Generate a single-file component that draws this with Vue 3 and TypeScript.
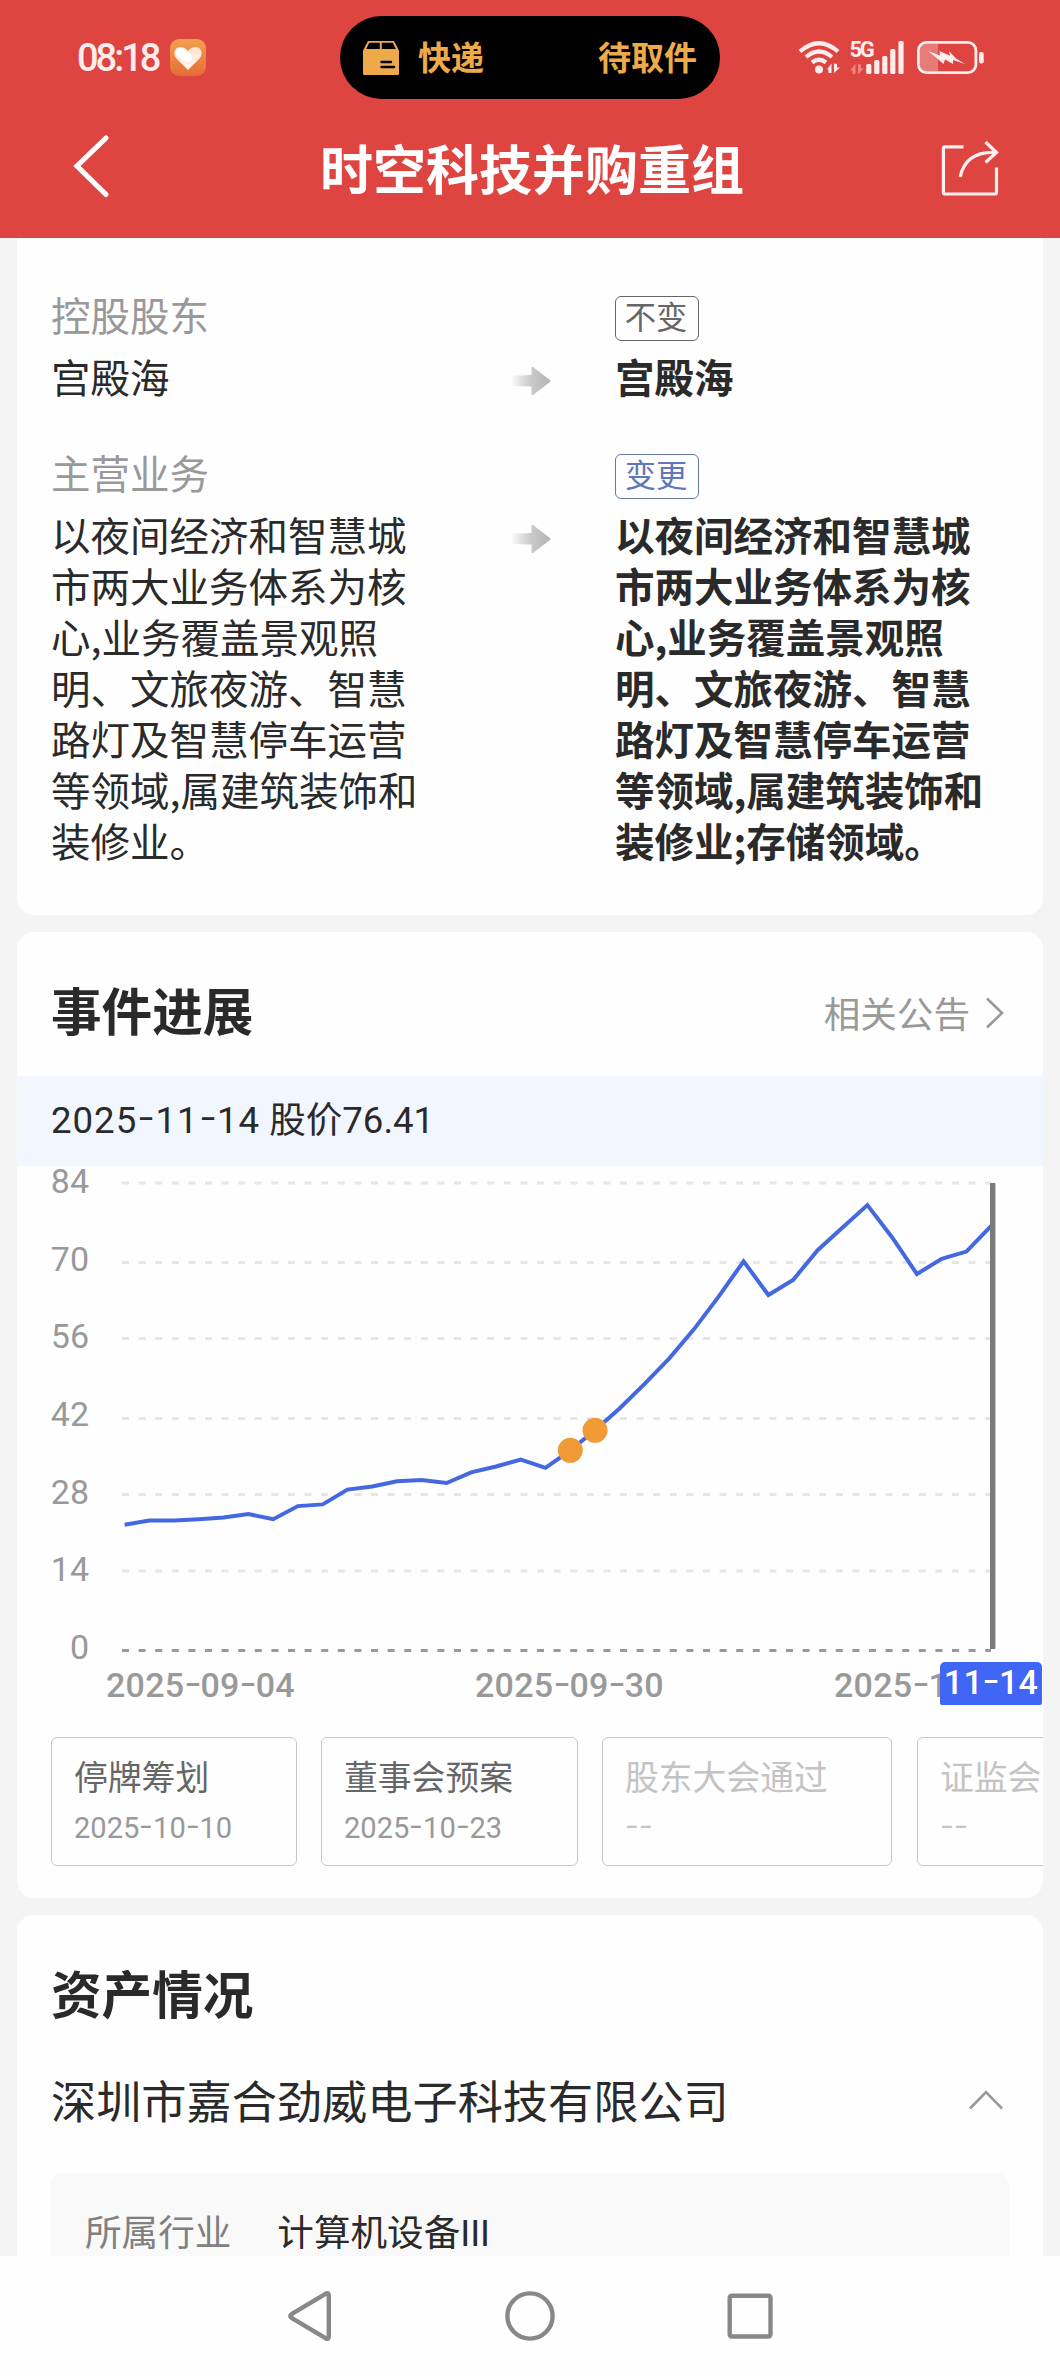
<script setup lang="ts">
import { computed } from 'vue'

interface Change {
  label: string
  tag: string
  changed: boolean
  before: string
  after: string
}
interface Stage {
  name: string
  date: string[]
  done: boolean
}

const changes: Change[] = [
  { label: '控股股东', tag: '不变', changed: false, before: '宫殿海', after: '宫殿海' },
  {
    label: '主营业务',
    tag: '变更',
    changed: true,
    before: '以夜间经济和智慧城市两大业务体系为核心,业务覆盖景观照明、文旅夜游、智慧路灯及智慧停车运营等领域,属建筑装饰和装修业。',
    after: '以夜间经济和智慧城市两大业务体系为核心,业务覆盖景观照明、文旅夜游、智慧路灯及智慧停车运营等领域,属建筑装饰和装修业;存储领域。',
  },
]

const yTicks = [84, 70, 56, 42, 28, 14, 0]
const gridY = [17, 96.5, 172.5, 252.5, 328.5, 405, 484.5]
const xTicks: string[][] = [
  ['2025', '09', '04'],
  ['2025', '09', '30'],
  ['2025', '11', '14'],
]

// Plot heights in chart pixels, one per trading day
const prices: number[] = [
  358.7, 354.6, 354.4, 353.2, 351.5, 348, 353.2, 340.1, 338.4, 323.6, 320.5, 315.3,
  313.9, 317, 306.4, 300.5, 293.6, 301.9, 284.3, 264.3, 242.3, 217.9, 192.4, 163.1, 130.4,
  95.3, 129, 113.9, 83.9, 61.5, 39.1, 71.5, 108, 92.9, 85.6, 59.8,
]
const px = (i: number): number => 36.6 + i * 24.76
const line = computed(() => prices.map((y, i) => `${px(i).toFixed(1)},${y}`).join(' '))
const events = [18, 19]

const stages: Stage[] = [
  { name: '停牌筹划', date: ['2025', '10', '10'], done: true },
  { name: '董事会预案', date: ['2025', '10', '23'], done: true },
  { name: '股东大会通过', date: ['', '', ''], done: false },
  { name: '证监会', date: ['', '', ''], done: false },
]
const stageWidths = [246, 257, 290, 257]
</script>

<template>
  <div class="screen">
    <header class="header">
      <div class="status">
        <span class="time">08:18</span>
        <svg class="badge" width="36" height="37" viewBox="0 0 36 37">
          <defs>
            <linearGradient id="badgeBg" x1="0" y1="0" x2="0" y2="1">
              <stop offset="0" stop-color="#f3a050" /><stop offset="1" stop-color="#e66c34" />
            </linearGradient>
            <linearGradient id="heart" x1="0" y1="0" x2="0" y2="1">
              <stop offset="0" stop-color="#fbe3cf" /><stop offset="1" stop-color="#fff6ee" />
            </linearGradient>
          </defs>
          <rect width="36" height="37" rx="9" fill="url(#badgeBg)" />
          <path d="M18 31 L6.5 19.5 C2 14.500 5 8 10.500 8 C14 8 16.500 9.800 18 12 C19.500 9.800 22 8 25.500 8 C31 8 34 14.500 29.500 19.500 Z" fill="url(#heart)" />
          <path d="M10 13.500 L17.500 18.500" stroke="#fff" stroke-width="9" stroke-linecap="round" />
        </svg>
        <div class="island">
          <svg width="36" height="34" viewBox="0 0 36 34">
            <path d="M5 0 H31 L36 9.500 V32.500 Q36 34 34.500 34 H1.500 Q0 34 0 32.500 V9.500 Z" fill="#edaa4a" />
            <path d="M6.200 1.800 H16.800 V8 H3.200 Z M18.800 1.800 H29.800 L32.800 8 H18.800 Z" fill="#000" />
            <path d="M18.500 21 H28 M18.500 26 H31" stroke="#000" stroke-width="2.400" stroke-linecap="round" />
          </svg>
          <span class="island-a">快递</span>
          <span class="island-b">待取件</span>
        </div>
        <svg class="signals" width="188" height="36" viewBox="797 40 188 36" fill="none">
          <g stroke="#ffecec" stroke-width="4.200">
            <path d="M800 51.500 Q819 35 838 51.500" />
            <path d="M806 57 Q819 46 832 57" />
            <path d="M812 62.500 Q819 57 826 62.500" />
          </g>
          <circle cx="819" cy="69.500" r="4" fill="#ffecec" />
          <path d="M831.500 63.500 V73 H828.500 V69.500 H827 Z M834 63.500 V73 L840 67.500 H837 V64 Z" fill="#ffecec" />
          <path d="M855.500 64 V74 H852.500 V70.500 H850 Z M858 64 V74 L864 68.500 H861 V64.500 Z" fill="#f08280" />
          <text x="849.500" y="57.300" class="net" fill="#ffecec">5G</text>
          <path d="M938 44 H925 Q920 44 920 49 V66 Q920 71 925 71 H938 Z" fill="#e57c79" />
          <g fill="#ffecec">
            <rect x="866.200" y="64" width="5.200" height="10" rx="1.500" />
            <rect x="874.200" y="60" width="5.200" height="14" rx="1.500" />
            <rect x="882.200" y="56" width="5.200" height="18" rx="1.500" />
            <rect x="890.200" y="49" width="5.200" height="25" rx="1.500" />
            <rect x="898.400" y="41" width="5.200" height="33" rx="1.500" />
            <rect x="979" y="52" width="4.700" height="11.500" rx="2" />
            <path d="M928 51 L940 55.500 L939.500 51 L950 55.800 L949 51 L956 58.500 L965 64 L953 60 L953 64 L945 59.500 L943.500 64 L936 57.500 Z" />
          </g>
          <rect x="918.400" y="42.300" width="57.500" height="30.400" rx="8" stroke="#ffecec" stroke-width="2.800" />
        </svg>
      </div>
      <div class="titlebar">
        <svg width="38" height="66" viewBox="73 133 38 66" fill="none">
          <path d="M106 138 L77 166 L106 194.500" stroke="#fff" stroke-width="5.200" stroke-linecap="round" />
        </svg>
        <h1>时空科技并购重组</h1>
        <svg width="60" height="60" viewBox="940 136 60 60" fill="none" stroke="#fff0f0" stroke-width="3.200">
          <path d="M963.500 146.800 H945.200 Q943.400 146.800 943.400 148.600 V192.200 Q943.400 194 945.200 194 H994.700 Q996.500 194 996.500 192.200 V167.500" />
          <path d="M960.200 177 C963.500 161 975 151.500 996 152.500" />
          <path d="M985.500 142 L996.500 152.500 L985.500 162.500" />
        </svg>
      </div>
    </header>

    <main class="content">
      <section class="card compare">
        <div v-for="c in changes" :key="c.label" class="change">
          <div class="before">
            <p class="label">{{ c.label }}</p>
            <p class="value">{{ c.before }}</p>
          </div>
          <svg class="arrow" width="40" height="30" viewBox="0 0 40 30">
            <defs>
              <linearGradient :id="'fade' + c.tag" x1="0" x2="1" y1="0" y2="0">
                <stop offset="0" stop-color="#c0c0c0" stop-opacity="0" />
                <stop offset=".5" stop-color="#cacaca" />
                <stop offset="1" stop-color="#b4b4b4" />
              </linearGradient>
            </defs>
            <path d="M0 11 Q0 9.800 1 9.700 L20.500 9 V2 Q20.500 .3 22 1 L39 14 Q40 15 39 16 L22 29 Q20.500 29.700 20.500 28 V20.500 L1 20 Q0 20 0 19 Z" :fill="`url(#fade${c.tag})`" />
          </svg>
          <div class="after">
            <p class="label"><span class="tag" :class="{ changed: c.changed }">{{ c.tag }}</span></p>
            <p class="value">{{ c.after }}</p>
          </div>
        </div>
      </section>

      <section class="card progress">
        <div class="head">
          <h2>事件进展</h2>
          <span class="more">相关公告
            <svg width="20" height="32" viewBox="0 0 20 32" fill="none" stroke="#999" stroke-width="2.600">
              <path d="M2 1.500 L17 16 L2 30.500" />
            </svg>
          </span>
        </div>
        <div class="band"><span class="num">2025<i class="dash">-</i>11<i class="dash">-</i>14</span> 股价76.41</div>
        <div class="chart">
          <div class="plot">
            <div class="y-axis"><span v-for="t in yTicks" :key="t">{{ t }}</span></div>
            <svg width="954" height="490" viewBox="1 0 954 490" fill="none">
              <line v-for="(y, i) in gridY" :key="y" x1="34" x2="903" :y1="y" :y2="y" stroke-width="3" stroke-dasharray="7 9.600" :stroke="i === 6 ? '#999' : '#e6e6e6'" />
              <polyline :points="line" stroke="#4468e0" stroke-width="4" />
              <rect x="902" y="17" width="5.400" height="466" fill="#7b7b7b" />
              <circle v-for="e in events" :key="e" :cx="px(e)" :cy="prices[e]" r="12.500" fill="#f19a38" />
            </svg>
          </div>
          <div class="x-axis">
            <span v-for="(t, i) in xTicks" :key="i">{{ t[0] }}<i class="dash">-</i>{{ t[1] }}<i class="dash">-</i>{{ t[2] }}</span>
            <b class="cursor">11<i class="dash">-</i>14</b>
          </div>
        </div>
        <div class="stages">
          <div v-for="(s, i) in stages" :key="s.name" class="stage" :class="{ pending: !s.done }" :style="{ width: stageWidths[i] + 'px' }">
            <p>{{ s.name }}</p>
            <small>{{ s.date[0] }}<i class="dash">-</i>{{ s.date[1] }}<i class="dash">-</i>{{ s.date[2] }}</small>
          </div>
        </div>
      </section>

      <section class="card assets">
        <h2>资产情况</h2>
        <div class="company">
          <span>深圳市嘉合劲威电子科技有限公司</span>
          <svg width="36" height="20" viewBox="0 0 36 20" fill="none" stroke="#999" stroke-width="2.600">
            <path d="M2 18.500 L18 2 L34 18.500" />
          </svg>
        </div>
        <div class="info"><span class="key">所属行业</span><span>计算机设备III</span></div>
      </section>
    </main>

    <nav class="nav">
      <svg width="1060" height="120" viewBox="0 2256 1060 120" fill="none" stroke="#888" stroke-width="4.400" stroke-linejoin="round">
        <path d="M325.500 2293.800 Q328.800 2292 328.800 2295.500 V2336.500 Q328.800 2340 325.500 2338.200 L291.500 2317.800 Q289 2316 291.500 2314.200 Z" />
        <circle cx="530" cy="2316" r="22.600" />
        <rect x="729.700" y="2295.700" width="40.800" height="40.800" rx="2" />
      </svg>
    </nav>
  </div>
</template>

<style>
body {
  margin: 0;
  background: #f4f4f4;
}
</style>

<style scoped>
.screen {
  display: flex;
  flex-direction: column;
  width: 1060px;
  height: 2376px;
  overflow: hidden;
  background: #f4f4f4;
  color: #2a2a2a;
  font-family: 'Noto Sans CJK SC', sans-serif;
}
p,
h1,
h2 {
  margin: 0;
}
svg {
  display: block;
  flex: none;
}
.header {
  flex: none;
  height: 238px;
  background: #de4440;
}
.status {
  display: flex;
  align-items: center;
  height: 115px;
}
.time {
  width: 93px;
  padding-left: 77px;
  color: #ffecec;
  font: 500 38px/40px 'Roboto', sans-serif;
  letter-spacing: -3px;
}
.island {
  display: flex;
  align-items: center;
  box-sizing: border-box;
  width: 380px;
  height: 83px;
  margin-left: 134px;
  padding: 0 23px;
  border-radius: 42px;
  background: #000;
  color: #edaa4a;
  font-size: 33px;
  font-weight: 700;
  line-height: 40px;
}
.island-a {
  margin: -3px 0 0 19px;
}
.island-b {
  margin: -3px 0 0 auto;
}
.signals {
  margin-left: 77px;
  overflow: visible;
}
.net {
  font: 700 22px 'Roboto', sans-serif;
  letter-spacing: -2.400px;
}
.titlebar {
  display: flex;
  align-items: center;
  justify-content: space-between;
  height: 102px;
  padding: 0 60px 0 73px;
}
h1 {
  margin-top: 2px;
  padding-left: 13px;
  color: #fff;
  font-size: 53px;
  font-weight: 700;
  line-height: 70px;
}
.content {
  display: flex;
  flex: none;
  flex-direction: column;
  gap: 17px;
  height: 2018px;
  padding: 0 17px;
  overflow: hidden;
}
.card {
  flex: none;
  box-sizing: border-box;
  overflow: hidden;
  border-radius: 17px;
  background: #fefefe;
}
.compare {
  height: 677px;
  padding: 50px 34px 0;
  border-radius: 0 0 17px 17px;
}
.change {
  display: flex;
  margin-bottom: 45px;
  font-size: 39.500px;
  line-height: 51px;
}
.before,
.after {
  width: 372px;
}
.label {
  height: 51px;
  margin-bottom: 11px;
  color: #999;
}
.after {
  font-weight: 700;
}
.arrow {
  margin: 78px 64px 0 88px;
}
.tag {
  display: block;
  box-sizing: border-box;
  width: 84px;
  height: 45px;
  padding-right: 2px;
  border: 1px solid #666;
  border-radius: 6px;
  color: #666;
  font-size: 31.300px;
  font-weight: 400;
  line-height: 37px;
  text-align: center;
  transform: translateY(8px);
}
.tag.changed {
  border-color: #66799f;
  color: #6078ba;
}
.progress {
  height: 966px;
}
.head {
  display: flex;
  align-items: center;
  justify-content: space-between;
  box-sizing: border-box;
  height: 144px;
  padding: 9px 38px 0 34px;
}
h2 {
  font-size: 50.600px;
  font-weight: 700;
  line-height: 60px;
}
.more {
  display: flex;
  gap: 15px;
  align-items: center;
  padding-top: 9px;
  color: #999;
  font-size: 36.600px;
  line-height: 40px;
}
.band {
  height: 90px;
  padding-left: 34px;
  background: #f2f6ff;
  font: 36.600px/90px 'Roboto', 'Noto Sans CJK SC', sans-serif;
}
.num {
  letter-spacing: 1px;
}
.dash {
  display: inline-block;
  width: 0.47em;
  font-style: normal;
  letter-spacing: 0;
  text-align: center;
  transform: translateY(-0.07em) scaleX(1.4);
}
.band .dash {
  width: 0.5em;
}
.plot {
  display: flex;
  height: 490px;
}
.y-axis {
  display: flex;
  flex-direction: column;
  justify-content: space-between;
  width: 72px;
  height: 506px;
  margin-top: -5px;
  color: #999;
  font: 34px/40px 'Roboto', sans-serif;
  text-align: right;
}
.x-axis {
  position: relative;
  display: flex;
  box-sizing: border-box;
  gap: 182px;
  height: 50px;
  padding: 9px 0 0 89px;
  color: #999;
  font: 500 34px/40px 'Roboto', sans-serif;
  letter-spacing: 0.300px;
  white-space: nowrap;
}
.x-axis span {
  flex: none;
  width: 187px;
}
.x-axis span:nth-child(3) {
  margin-left: -10px;
}
.cursor {
  position: absolute;
  top: 6px;
  right: 1px;
  width: 102px;
  height: 43px;
  border-radius: 5px 5px 2px 2px;
  background: #4066f5;
  color: #fff;
  font-weight: 500;
  line-height: 41px;
  text-align: center;
}
.stages {
  display: flex;
  gap: 24px;
  margin-top: 31px;
  padding-left: 34px;
}
.stage {
  flex: none;
  box-sizing: border-box;
  height: 129px;
  padding: 17px 0 0 22px;
  border: 1px solid #c8c8c8;
  border-radius: 6px;
  color: #666;
  font-size: 33.800px;
  line-height: 42px;
  white-space: nowrap;
}
.stage:last-child {
  margin-left: 1px;
}
.stage small {
  display: block;
  margin-top: 11px;
  color: #999;
  font: 29.100px/40px 'Roboto', sans-serif;
}
.stage.pending,
.stage.pending small {
  color: #c3c3c3;
}
.assets {
  height: 480px;
  padding: 47px 34px 0;
}
.company {
  display: flex;
  align-items: center;
  justify-content: space-between;
  height: 60px;
  margin-top: 48px;
  padding-right: 5px;
  font-size: 45.200px;
  line-height: 60px;
}
.info {
  display: flex;
  gap: 46px;
  height: 300px;
  margin-top: 43px;
  padding: 41px 34px 0;
  border-radius: 12px;
  background: #f9f9f9;
  font: 36.600px/40px 'Roboto', 'Noto Sans CJK SC', sans-serif;
}
.key {
  color: #808080;
}
.nav {
  flex: none;
  height: 120px;
  background: #fefefe;
}
</style>
